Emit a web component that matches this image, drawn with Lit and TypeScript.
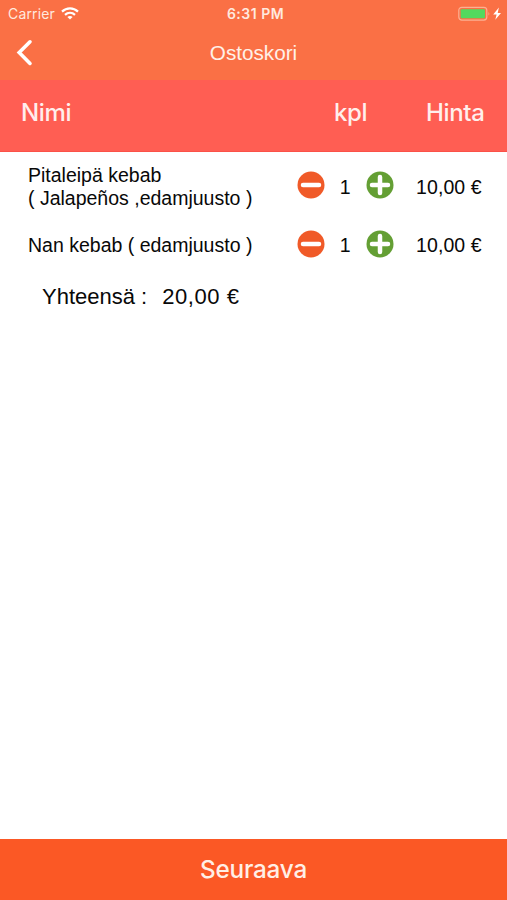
import { LitElement, html, css } from "lit";
import { customElement, state } from "lit/decorators.js";

interface CartItem {
  name: string;
  extras: string;
  twoLines: boolean;
  count: number;
  price: number;
}

const euros = (n: number) => `${n.toFixed(2).replace(".", ",")} €`;

@customElement("app-root")
export class AppRoot extends LitElement {
  @state() private items: CartItem[] = [
    { name: "Pitaleipä kebab", extras: "( Jalapeños ,edamjuusto )", twoLines: true, count: 1, price: 10 },
    { name: "Nan kebab", extras: "( edamjuusto )", twoLines: false, count: 1, price: 10 },
  ];

  static styles = css`
    :host {
      display: flex;
      flex-direction: column;
      height: 900px;
      background: #fff;
      color: #080808;
      font-family: "Liberation Sans", Arial, sans-serif;
      overflow: hidden;
    }
    svg { display: block; }
    button { all: unset; display: block; cursor: pointer; }
    .top { height: 80px; background: #fa7045; color: #fff; }
    .status {
      display: grid;
      grid-template-columns: 1fr auto 1fr;
      align-items: center;
      height: 27px;
      padding: 0 4px 0 8px;
      font: 14px/27px Inter, sans-serif;
      color: #ffe9df;
    }
    .carrier { display: flex; align-items: center; gap: 6px; letter-spacing: 0.16px; }
    .carrier span, .clock { padding-top: 1px; line-height: 26px; }
    .clock { font-size: 14px; font-weight: 600; letter-spacing: 0.5px; }
    .power { display: flex; justify-content: flex-end; align-items: center; }
    .nav {
      display: grid;
      grid-template-columns: 60px 1fr 60px;
      align-items: center;
      height: 52px;
    }
    .back { padding-left: 15px; }
    .title { text-align: center; font-size: 20.7px; color: #fff0e8; }
    .columns {
      display: grid;
      grid-template-columns: 313px 92px 1fr;
      align-items: center;
      height: 72px;
      box-sizing: border-box;
      padding: 0 0 5px 21px;
      background: #ff5e53;
      border-bottom: 1px solid #fb5148;
      font: 450 24px/30px Inter, sans-serif;
      letter-spacing: -0.35px;
      color: #ffefec;
    }
    .list { flex: 1; padding-top: 6px; }
    .row {
      display: grid;
      grid-template-columns: 269px 28px 40.5px 28px 1fr;
      align-items: center;
      height: 58px;
      padding-left: 28px;
      font-size: 19.5px;
      line-height: 23px;
    }
    .row button { padding-bottom: 4px; }
    .row + .row button { padding-bottom: 2px; }
    .name { white-space: nowrap; }
    .count { text-align: center; }
    .price { padding-left: 22.5px; white-space: nowrap; letter-spacing: 0.1px; }
    .total { display: flex; gap: 15px; padding: 8px 0 0 42px; font-size: 22px; line-height: 30px; }
    .sum { letter-spacing: 0.55px; }
    .next {
      height: 61px;
      text-align: center;
      background: #fb5825;
      color: #ffefe6;
      font: 450 24.3px/61px Inter, sans-serif;
      letter-spacing: -0.2px;
    }
  `;

  private change(index: number, by: number) {
    this.items = this.items.map((it, i) =>
      i === index ? { ...it, count: Math.max(0, it.count + by) } : it
    );
  }

  private sign(plus: boolean) {
    return html`<svg width="28" height="28" viewBox="0 0 28 28">
      <circle cx="14" cy="14" r="13.5" fill=${plus ? "#649f34" : "#f05a28"} />
      <path d=${plus ? "M6 14H22M14 6V22" : "M6 14H22"}
        stroke="#fff" stroke-width="4.5" stroke-linecap="round" />
    </svg>`;
  }

  render() {
    const total = this.items.reduce((sum, it) => sum + it.count * it.price, 0);
    return html`
      <header class="top">
        <div class="status">
          <div class="carrier">
            <span>Carrier</span>
            <svg width="18" height="13" viewBox="0 0 18 13" fill="none" stroke="#fff" stroke-width="2.2">
              <path d="M1 4.6C5.5 .3 12.5 .3 17 4.6" />
              <path d="M4 7.9C6.9 5.2 11.1 5.2 14 7.9" />
              <path d="M9 12.5L6.4 9.9C7.9 8.6 10.1 8.6 11.6 9.9Z" fill="#fff" stroke="none" />
            </svg>
          </div>
          <span class="clock">6:31 PM</span>
          <div class="power">
            <svg width="45" height="16" viewBox="0 0 45 16">
              <rect x=".8" y="1.3" width="28" height="12.8" rx="3" fill="none" stroke="#fcb092" stroke-width="1.2" />
              <rect x="2.7" y="3.2" width="24.3" height="9" rx="1" fill="#53d95e" />
              <path d="M30.5 5.7Q32.2 7.700 30.5 9.7Z" fill="#fcb092" />
              <path d="M40.9 1.6L35.2 8.4H38.6L37.3 13.7L43 6.9H39.7Z" fill="#fff" />
            </svg>
          </div>
        </div>
        <nav class="nav">
          <button class="back" aria-label="Takaisin">
            <svg width="18" height="28" viewBox="0 0 18 28" fill="none" stroke="#fff" stroke-width="3.6" stroke-linecap="round">
              <path d="M15 2.8L4.2 13.6L15 24.4" />
            </svg>
          </button>
          <span class="title">Ostoskori</span>
        </nav>
      </header>
      <div class="columns"><span>Nimi</span><span>kpl</span><span>Hinta</span></div>
      <main class="list">
        ${this.items.map(
          (it, i) => html`<div class="row">
            <span class="name">${it.name}${it.twoLines ? html`<br />` : " "}${it.extras}</span>
            <button aria-label="Vähennä" @click=${() => this.change(i, -1)}>${this.sign(false)}</button>
            <span class="count">${it.count}</span>
            <button aria-label="Lisää" @click=${() => this.change(i, 1)}>${this.sign(true)}</button>
            <span class="price">${euros(it.price)}</span>
          </div>`
        )}
        <div class="total"><span>Yhteensä :</span><span class="sum">${euros(total)}</span></div>
      </main>
      <button class="next">Seuraava</button>
    `;
  }
}
